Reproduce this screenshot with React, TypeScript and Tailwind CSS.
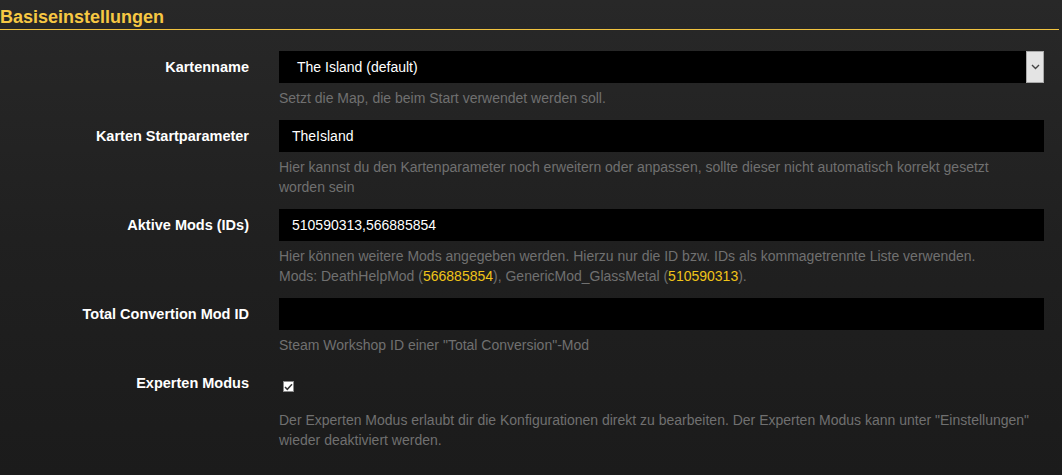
import React from "react";

const font = { fontFamily: '"Liberation Sans", Arial, sans-serif' };

function Label({ children }: { children: React.ReactNode }) {
  return (
    <div className="text-right font-bold text-white text-[14.5px] leading-[32px] whitespace-nowrap">{children}</div>
  );
}

function Hint({ children, className = "mt-[5px]" }: { children: React.ReactNode; className?: string }) {
  return <div className={`${className} text-[14px] leading-[20px] text-[#707070]`}>{children}</div>;
}

export default function App() {
  return (
    <div
      className="w-[1062px] h-[475px] overflow-hidden bg-gradient-to-b from-[#282828] via-[#202020] to-[#1b1b1b]"
      style={font}
    >
      <div className="pr-[3px]">
        <h2 className="pt-[7px] pb-[2px] text-[18px] leading-[20px] font-bold text-[#f7c843] border-b border-[#f2c440]">
          Basiseinstellungen
        </h2>
      </div>

      <div className="mt-[21px] pr-[18px] grid grid-cols-[249px_1fr] gap-x-[30px] gap-y-[12px]">
        <Label>Kartenname</Label>
        <div>
          <div className="h-[32px] bg-black flex items-center">
            <span className="flex-1 pl-[18px] text-white text-[14px]">The Island (default)</span>
            <div className="h-[32px] w-[18px] bg-[#e4e4e4] border border-[#a9a9a9] flex items-center justify-center">
              <svg width="9" height="6" viewBox="0 0 9 6">
                <path d="M1 1 L4.5 4.5 L8 1" fill="none" stroke="#444" strokeWidth="1.4" />
              </svg>
            </div>
          </div>
          <Hint>Setzt die Map, die beim Start verwendet werden soll.</Hint>
        </div>

        <Label>Karten Startparameter</Label>
        <div>
          <div className="h-[32px] bg-black flex items-center pl-[13px] text-white text-[14px]">TheIsland</div>
          <Hint>
            Hier kannst du den Kartenparameter noch erweitern oder anpassen, sollte dieser nicht automatisch korrekt gesetzt
            <br />
            worden sein
          </Hint>
        </div>

        <Label>Aktive Mods (IDs)</Label>
        <div>
          <div className="h-[32px] bg-black flex items-center pl-[13px] text-white text-[14px]">510590313,566885854</div>
          <Hint>
            Hier können weitere Mods angegeben werden. Hierzu nur die ID bzw. IDs als kommagetrennte Liste verwenden.
            <br />
            Mods: DeathHelpMod (<span className="text-[#f0c419]">566885854</span>), GenericMod_GlassMetal (
            <span className="text-[#f0c419]">510590313</span>).
          </Hint>
        </div>

        <Label>Total Convertion Mod ID</Label>
        <div>
          <div className="h-[32px] bg-black" />
          <Hint>Steam Workshop ID einer "Total Conversion"-Mod</Hint>
        </div>

        <Label>Experten Modus</Label>
        <div>
          <div className="h-[32px] flex items-start pt-[14px] pl-[4px]">
            <div className="w-[11px] h-[11px] bg-white border border-[#8a8a8a] flex items-center justify-center">
              <svg width="9" height="8" viewBox="0 0 9 8">
                <path d="M1 4 L3.3 6.3 L8 1.3" fill="none" stroke="#333" strokeWidth="1.5" />
              </svg>
            </div>
          </div>
          <Hint className="mt-[11px]">
            Der Experten Modus erlaubt dir die Konfigurationen direkt zu bearbeiten. Der Experten Modus kann unter "Einstellungen" wieder deaktiviert werden.
          </Hint>
        </div>
      </div>
    </div>
  );
}
